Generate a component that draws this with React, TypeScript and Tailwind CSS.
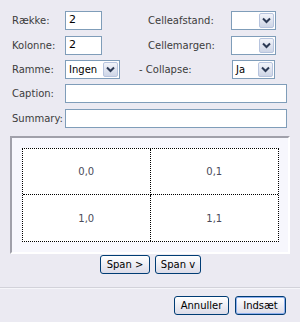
const font = { fontFamily: '"DejaVu Sans", Verdana, sans-serif' };

function Chevron() {
  return (
    <svg width="9" height="7" viewBox="0 0 9 7" aria-hidden>
      <path d="M1 1.5 L4.5 5 L8 1.5" fill="none" stroke="#2c3a55" strokeWidth="2" />
    </svg>
  );
}

function Select({ value, width }: { value: string; width: string }) {
  return (
    <div className={`flex h-[19px] ${width} items-stretch border border-[#7f9db9] bg-white`}>
      <span className="flex flex-1 items-center pl-[3px] text-[10px] text-black">{value}</span>
      <span className="m-px flex w-[15px] items-center justify-center rounded-[2px] border border-[#b7c4de] bg-gradient-to-b from-[#f2f4fa] to-[#cdd5e6]">
        <Chevron />
      </span>
    </div>
  );
}

function TextInput({ value, width }: { value?: string; width: string }) {
  return (
    <div className={`flex h-[19px] ${width} items-center border border-[#7f9db9] bg-white pl-[3px] text-[11px] text-black`}>
      {value}
    </div>
  );
}

function Button({ label, width, primary }: { label: string; width: string; primary?: boolean }) {
  return (
    <button
      className={`flex h-[19px] ${width} items-center justify-center rounded-[3px] border border-[#003c74] bg-gradient-to-b from-white to-[#dcdce8] text-[10px] text-black ${
        primary ? "shadow-[inset_0_0_0_1px_#8fb0ee]" : ""
      }`}
    >
      {label}
    </button>
  );
}

function Label({ text, width }: { text: string; width: string }) {
  return <span className={`${width} text-[10px] leading-none text-[#3c3c3c]`}>{text}</span>;
}

export default function App() {
  return (
    <div className="flex h-[322px] w-[300px] flex-col bg-[#ebeaf2]" style={font}>
      <div className="ml-[12px] mt-[11px] flex h-[19px] items-center">
        <Label text="Række:" width="w-[53px]" />
        <TextInput value="2" width="w-[37px]" />
        <span className="ml-[46px] w-[83px] text-[10px] text-[#3c3c3c]">Celleafstand:</span>
        <Select value="" width="w-[45px]" />
      </div>
      <div className="ml-[12px] mt-[6px] flex h-[19px] items-center">
        <Label text="Kolonne:" width="w-[53px]" />
        <TextInput value="2" width="w-[37px]" />
        <span className="ml-[46px] w-[83px] text-[10px] text-[#3c3c3c]">Cellemargen:</span>
        <Select value="" width="w-[45px]" />
      </div>
      <div className="ml-[12px] mt-[5px] flex h-[19px] items-center">
        <Label text="Ramme:" width="w-[53px]" />
        <Select value="Ingen" width="w-[55px]" />
        <span className="ml-[19px] w-[93px] text-[10px] text-[#3c3c3c]">- Collapse:</span>
        <Select value="Ja" width="w-[43px]" />
      </div>
      <div className="ml-[12px] mt-[5px] flex h-[19px] items-center">
        <Label text="Caption:" width="w-[53px]" />
        <TextInput width="w-[222px]" />
      </div>
      <div className="ml-[12px] mt-[6px] flex h-[19px] items-center">
        <Label text="Summary:" width="w-[53px]" />
        <TextInput width="w-[222px]" />
      </div>

      <div className="mx-[10px] mt-[8px] h-[118px] border-2 border-l-[#a0a0aa] border-t-[#a0a0aa] border-r-white border-b-white bg-[#f7f7fd] pl-[10px] pt-[10px]">
        <div className="grid h-[94px] w-[257px] grid-cols-2 grid-rows-2 border border-dotted border-black bg-white text-[10px] text-[#4a4a5a]">
          <div className="flex items-center justify-center border-b border-r border-dotted border-black">0,0</div>
          <div className="flex items-center justify-center border-b border-dotted border-black">0,1</div>
          <div className="flex items-center justify-center border-r border-dotted border-black">1,0</div>
          <div className="flex items-center justify-center">1,1</div>
        </div>
      </div>

      <div className="mt-[1px] flex justify-center gap-[5px] pl-[1px]">
        <Button label="Span >" width="w-[50px]" />
        <Button label="Span v" width="w-[46px]" />
      </div>

      <div className="mt-[13px] h-px bg-[#d2d2da]" />
      <div className="h-px bg-[#f6f6fa]" />

      <div className="mt-[7px] flex justify-end gap-[6px] pr-[14px]">
        <Button label="Annuller" width="w-[55px]" />
        <Button label="Indsæt" width="w-[51px]" primary />
      </div>
    </div>
  );
}
